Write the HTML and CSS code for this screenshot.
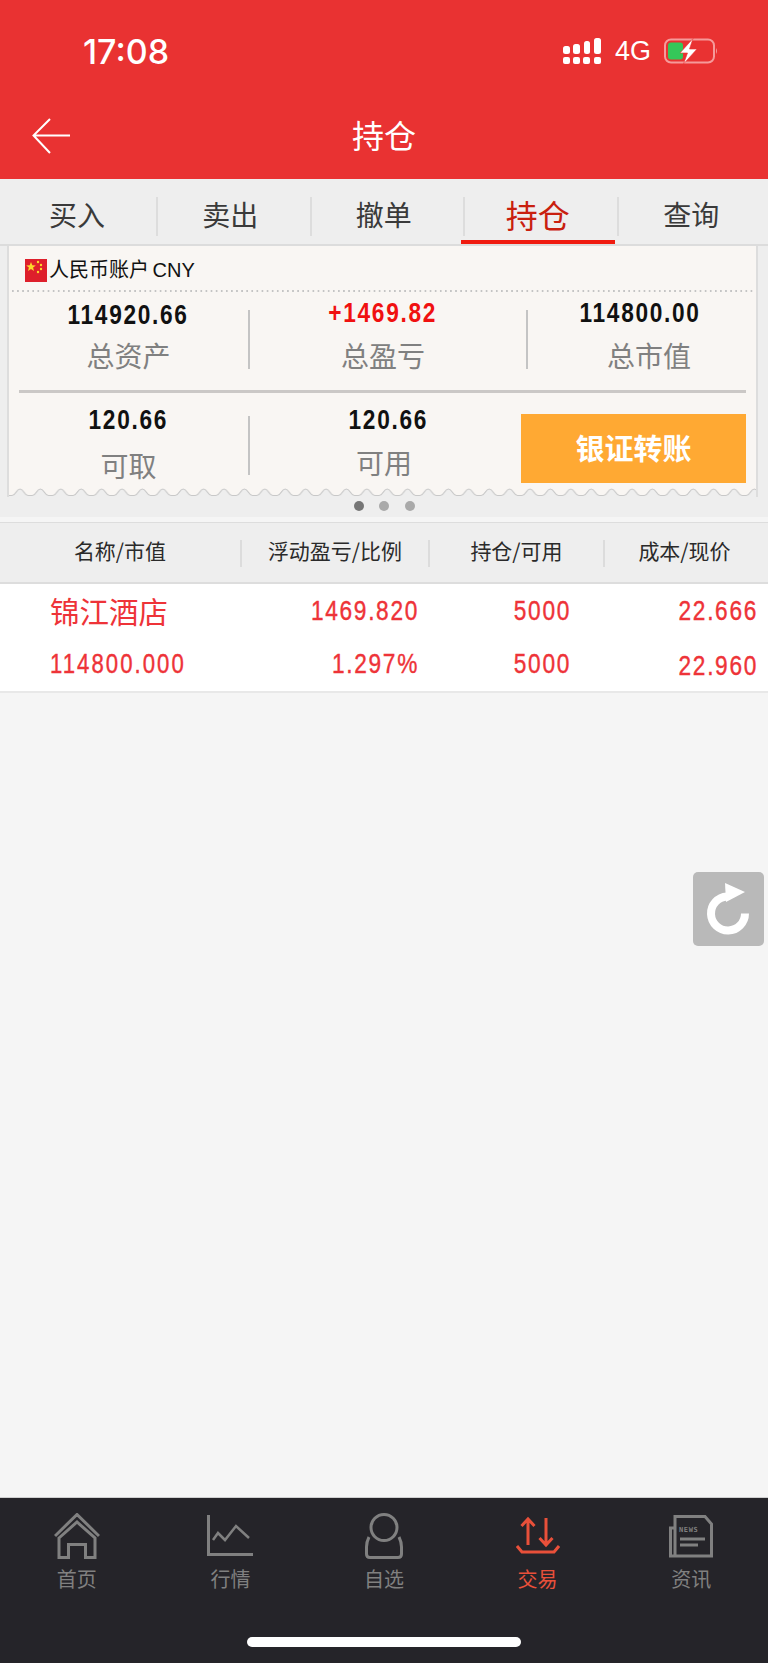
FILE: index.html
```html
<!DOCTYPE html>
<html lang="zh">
<head>
<meta charset="utf-8">
<title>持仓</title>
<link rel="stylesheet" href="styles.css">
</head>
<body>
<div class="page">
  <header class="top">
    <div class="status">
      <span class="time">17:08</span>
      <div class="status-right">
        <svg class="signal" width="38" height="26" viewBox="0 0 38 26"><g fill="#fff"><rect x="0" y="19" width="7" height="7" rx="2"/><rect x="10" y="19" width="7" height="7" rx="2"/><rect x="20" y="19" width="7" height="7" rx="2"/><rect x="31" y="19" width="7" height="7" rx="2"/><rect x="0" y="8" width="7" height="8" rx="2.5"/><rect x="10" y="6" width="7" height="10" rx="2.5"/><rect x="21" y="3" width="6" height="13" rx="2.5"/><rect x="31" y="0" width="7" height="16" rx="2.5"/></g></svg>
        <span class="net">4G</span>
        <svg class="battery" width="54" height="26" viewBox="0 0 54 26"><rect x="1" y="1.5" width="49" height="23" rx="6" fill="none" stroke="#f59a9a" stroke-width="2"/><path d="M52 10 Q54 13 52 16Z" fill="#f59a9a"/><rect x="4" y="4.5" width="15" height="17" rx="3" fill="#35c759"/><path d="M29 0.5 L16 15 H23.5 L19.5 26 L33 11 H25.5 Z" fill="#fff" stroke="#e93232" stroke-width="0.6"/></svg>
      </div>
    </div>
    <div class="nav">
      <svg class="back" width="38" height="36" viewBox="0 0 38 36"><path d="M38 17.5 H1.5 M18 1 L1.5 17.5 L18 35" fill="none" stroke="#fff" stroke-width="2"/></svg>
      <h1 class="title">持仓</h1>
    </div>
  </header>

  <nav class="tabs">
    <div class="tab tab-first">买入</div>
    <div class="tab">卖出</div>
    <div class="tab">撤单</div>
    <div class="tab tab-active">持仓</div>
    <div class="tab tab-last">查询</div>
  </nav>

  <section class="summary">
    <div class="card">
      <div class="card-head">
        <svg class="flag" width="22" height="23" viewBox="0 0 22 23"><rect width="22" height="23" fill="#de1f2b"/><polygon fill="#fbd92b" points="6,3 7.3,6.2 10.8,6.4 8.1,8.6 9,12 6,10.1 3,12 3.9,8.6 1.2,6.4 4.7,6.2"/><g fill="#fbd92b"><circle cx="13" cy="3" r="1.2"/><circle cx="16" cy="6" r="1.2"/><circle cx="16" cy="10" r="1.2"/><circle cx="13" cy="13" r="1.2"/></g></svg>
        <span class="account">人民币账户 CNY</span>
      </div>
      <div class="dotted"></div>
      <div class="stats">
        <div class="stat"><div class="num num-low">114920.66</div><div class="lbl">总资产</div></div>
        <div class="vline"></div>
        <div class="stat stat-mid"><div class="num num-up">+1469.82</div><div class="lbl">总盈亏</div></div>
        <div class="vline"></div>
        <div class="stat stat-end"><div class="num num-shift">114800.00</div><div class="lbl">总市值</div></div>
      </div>
      <div class="hline"></div>
      <div class="stats stats-low">
        <div class="stat"><div class="num">120.66</div><div class="lbl">可取</div></div>
        <div class="vline vline-low"></div>
        <div class="stat stat-mid"><div class="num">120.66</div><div class="lbl lbl-left">可用</div></div>
        <div class="vline vline-none"></div>
        <div class="transfer">银证转账</div>
      </div>
      <svg class="scallop" width="100%" height="9" aria-hidden="true"><defs><pattern id="sc" width="20.4" height="9" patternUnits="userSpaceOnUse"><path d="M-1 7.5 H3 C7 7.5 7 1 11 1 C15 1 15 7.5 19 7.5 H21.4 V10 H-1 Z" fill="#eeeeee" stroke="#c8c8c8" stroke-width="1.2"/></pattern></defs><rect width="100%" height="9" fill="url(#sc)"/></svg>
    </div>
    <div class="dots"><i class="dot dot-on"></i><i class="dot"></i><i class="dot"></i></div>
  </section>

  <div class="gap"></div>

  <div class="thead">
    <div class="th">名称/市值</div>
    <div class="th th-line">浮动盈亏/比例</div>
    <div class="th th-line">持仓/可用</div>
    <div class="th th-line th-end">成本/现价</div>
  </div>

  <div class="row">
    <div class="cell cell-name">
      <div class="stock">锦江酒店</div>
      <div class="mono mv">114800.000</div>
    </div>
    <div class="cell cell-pl"><div class="mono">1469.820</div><div class="mono">1.297%</div></div>
    <div class="cell cell-qty"><div class="mono">5000</div><div class="mono">5000</div></div>
    <div class="cell cell-cost"><div class="mono">22.666</div><div class="mono low">22.960</div></div>
  </div>

  <main class="blank"></main>

  <button class="refresh" aria-label="刷新"><svg width="71" height="74" viewBox="0 0 71 74"><path d="M34 24.5 A17 17 0 1 0 52 41.5" fill="none" stroke="#fff" stroke-width="8"/><polygon points="32,11 52,20 33,30" fill="#fff"/></svg></button>

  <footer class="bottom">
    <div class="bar">
      <div class="item">
        <svg class="ic" width="46" height="46" viewBox="0 0 46 46"><path d="M1 23 L23 1.5 L45 23 M5 25 L23 9 L41 25 V44.5 H31.5 V31.5 H14.5 V44.5 H5 Z" fill="none" stroke="#808080" stroke-width="3"/></svg>
        <span>首页</span>
      </div>
      <div class="item">
        <svg class="ic" width="46" height="46" viewBox="0 0 46 46"><path d="M1.5 2 V41.5 H46" fill="none" stroke="#808080" stroke-width="3"/><path d="M6 27 L11 20 L18 27 L29 13 L42 25" fill="none" stroke="#808080" stroke-width="2.5"/></svg>
        <span>行情</span>
      </div>
      <div class="item">
        <svg class="ic" width="38" height="46" viewBox="0 0 38 46"><ellipse cx="19" cy="14.5" rx="13" ry="13" fill="none" stroke="#808080" stroke-width="3"/><path d="M4 24 Q1.5 29 1.5 34 V41 Q1.5 44.5 5 44.5 H33 Q36.5 44.5 36.5 41 V34 Q36.5 29 34 24" fill="none" stroke="#808080" stroke-width="3"/></svg>
        <span>自选</span>
      </div>
      <div class="item item-on">
        <svg class="ic" width="44" height="46" viewBox="0 0 44 46"><g fill="none" stroke="#e9503a" stroke-width="3"><path d="M12 32 V7 M5.5 13 L12 6 L18.5 13"/><path d="M30 5 V31 M23.5 25 L30 32 L36.5 25"/><path d="M1 33 L6 39 H38 L43 33"/></g></svg>
        <span>交易</span>
      </div>
      <div class="item">
        <svg class="ic" width="44" height="46" viewBox="0 0 44 46"><path d="M5 15 H1.5 V43 H42.5 V11 L36 3.5 H6 V43" fill="none" stroke="#808080" stroke-width="3"/><text x="10" y="19" class="news">NEWS</text><path d="M11 26 H36 M11 32 H29" fill="none" stroke="#808080" stroke-width="3"/></svg>
        <span>资讯</span>
      </div>
    </div>
    <div class="home"></div>
  </footer>
</div>
</body>
</html>
```

FILE: styles.css
```css
* { box-sizing: border-box; }
html, body { margin: 0; padding: 0; }
body {
  width: 768px;
  height: 1663px;
  overflow: hidden;
  background: #f5f5f5;
  font-family: "Noto Sans CJK SC", "Liberation Sans", sans-serif;
}
.page {
  position: relative;
  width: 768px;
  height: 1663px;
  display: flex;
  flex-direction: column;
}

/* header */
.top { background: #e93232; color: #fff; height: 179px; flex: none; }
.status {
  height: 102px;
  display: flex;
  align-items: center;
  justify-content: space-between;
  padding: 0 50px 0 83px;
}
.time { font-family: Inter, "Liberation Sans", sans-serif; font-size: 34px; font-weight: 500; }
.status-right { display: flex; align-items: center; }
.signal { margin-top: -1px; }
.net { font-family: "Liberation Sans", sans-serif; font-size: 27px; margin: 0 13px 0 14px; }
.nav {
  position: relative;
  height: 68px;
  display: flex;
  align-items: center;
  justify-content: center;
  padding-bottom: 4px;
}
.back { position: absolute; left: 32px; top: 16px; }
.title { margin: 0; font-size: 32px; font-weight: 400; line-height: 1; }

/* tabs */
.tabs {
  flex: none;
  height: 67px;
  display: grid;
  grid-template-columns: 158px 153.5px 153.5px 153.5px 1fr;
  background: #eeeeee;
  padding-top: 18px;
  border-bottom: 2px solid #dcdcdc;
}
.tab {
  position: relative;
  height: 39px;
  display: flex;
  align-items: center;
  justify-content: center;
  padding: 0 7px 6px 0;
  font-size: 28px;
  color: #3a3a3a;
  border-right: 2px solid #dddddd;
}
.tab-first { padding-right: 2px; }
.tab-last { border-right: 0; padding-right: 4px; }
.tab-active { color: #c9200f; font-size: 32px; padding-right: 6px; }
.tab-active::after {
  content: "";
  position: absolute;
  left: -4px;
  right: 2px;
  bottom: -8px;
  height: 4px;
  background: #f01b0f;
}

/* summary card */
.summary { flex: none; background: #eeeeee; height: 271px; padding: 0 10px 0 7px; }
.card { background: #f9f6f3; border: solid #dddddd; border-width: 0 2px; height: 251px; }
.card-head {
  height: 44px;
  padding: 13px 0 0 16px;
  display: flex;
  align-items: flex-start;
}
.flag { flex: none; }
.account {
  font-family: "Liberation Sans", "Noto Sans CJK SC", sans-serif;
  font-size: 20px;
  line-height: 23px;
  word-spacing: -2px;
  color: #111;
  margin-left: 2px;
}
.dotted {
  height: 2px;
  margin: 0 2px 0 3px;
  background: linear-gradient(90deg, #c4c4c4 2px, transparent 2px) 0 0 / 5.1px 2px repeat-x;
}
.stats { display: grid; grid-template-columns: 239px 2px 276px 2px 1fr; height: 98px; }
.stat { display: flex; flex-direction: column; align-items: center; padding-top: 6px; }
.stat-mid { padding-right: 10px; }
.stat-end { padding-left: 14px; }
.num {
  font-family: "Liberation Sans", sans-serif;
  font-size: 27px;
  font-weight: 700;
  line-height: 30px;
  letter-spacing: 2px;
  color: #111;
  transform: scaleX(0.84);
}
.num-low { margin-top: 2px; margin-bottom: -2px; }
.num-up { color: #f01010; }
.num-shift { margin-right: 17px; }
.lbl { font-size: 28px; line-height: 36px; margin-top: 9px; color: #808080; }
.vline { background: #c4c4c4; height: 59px; margin-top: 18px; }
.vline-none { background: transparent; }
.hline { height: 3px; background: #cbc8c6; margin: 0 10px; }
.stats-low { height: 95px; }
.stats-low .stat { padding-top: 12px; }
.stats-low .lbl { margin-top: 12px; }
.stats-low .lbl-left { margin-top: 9px; }
.stats-low .stat-mid { padding-left: 4px; padding-right: 4px; }
.stats-low .stat-mid .lbl { margin-right: 8px; }
.vline-low { margin-top: 23px; }
.transfer {
  height: 69px;
  margin-top: 21px;
  margin-left: -7px;
  margin-right: 10px;
  padding-bottom: 3px;
  background: #ffa933;
  color: #fff;
  font-size: 29px;
  font-weight: 700;
  display: flex;
  align-items: center;
  justify-content: center;
}
.scallop { display: block; }
.dots { display: flex; justify-content: center; gap: 15.5px; padding-top: 4px; margin-left: 3px; }
.dot { width: 10px; height: 10px; border-radius: 50%; background: #a9a9a9; }
.dot-on { background: #767676; }
.gap { flex: none; height: 6px; background: #f5f5f5; border-bottom: 1px solid #dddddd; }

/* table */
.thead {
  flex: none;
  height: 61px;
  display: grid;
  grid-template-columns: 240px 188px 175px 165px;
  background: #eeeeee;
  border-bottom: 2px solid #dddddd;
  padding-top: 17px;
}
.th {
  height: 27px;
  font-size: 21px;
  line-height: 20px;
  text-align: center;
  color: #2a2a2a;
}
.th-line { border-left: 2px solid #dcdcdc; }
.th-end { padding-right: 4px; }
.row {
  flex: none;
  height: 109px;
  display: grid;
  grid-template-columns: 419px 152px 187px;
  background: #fff;
  border-bottom: 2px solid #e8e8e8;
  color: #ee3338;
}
.cell { padding-top: 7px; text-align: right; white-space: nowrap; }
.cell-name { grid-row: 1; grid-column: 1; text-align: left; padding: 6px 0 0 50px; }
.cell-pl { grid-row: 1; grid-column: 1; }
.cell-qty { grid-column: 2; }
.cell-cost { grid-column: 3; }
.stock { font-size: 29.5px; line-height: 40px; }
.mono {
  font-family: "Liberation Sans", sans-serif;
  font-size: 27px;
  line-height: 40px;
  letter-spacing: 2px;
  -webkit-text-stroke: 0.4px currentColor;
  transform: scaleX(0.84);
  transform-origin: right center;
}
.cell .mono + .mono { margin-top: 13px; }
.cell-name .mv { margin-top: 14px; letter-spacing: 2.5px; transform: scaleX(0.82); transform-origin: left center; }
.low { position: relative; top: 2px; }

.blank { flex: 1; }

.refresh {
  position: absolute;
  left: 693px;
  top: 872px;
  width: 71px;
  height: 74px;
  padding: 0;
  border: 0;
  border-radius: 5px;
  background: #b9b9b9;
}
.refresh svg { display: block; }

/* bottom bar */
.bottom { flex: none; height: 166px; background: #252429; border-top: 1px solid #cfcfcf; }
.bar { display: flex; height: 139px; padding-top: 15px; }
.item {
  flex: 1;
  display: flex;
  flex-direction: column;
  align-items: center;
  color: #808080;
  font-size: 20px;
  line-height: 28px;
}
.item-on { color: #e9503a; }
.ic { display: block; margin-bottom: 6px; }
.news { font-family: "DejaVu Sans Mono", monospace; font-size: 7px; font-weight: 700; fill: #808080; letter-spacing: 0.6px; }
.home { width: 274px; height: 10px; margin: 0 auto; background: #fff; border-radius: 5px; }
```
